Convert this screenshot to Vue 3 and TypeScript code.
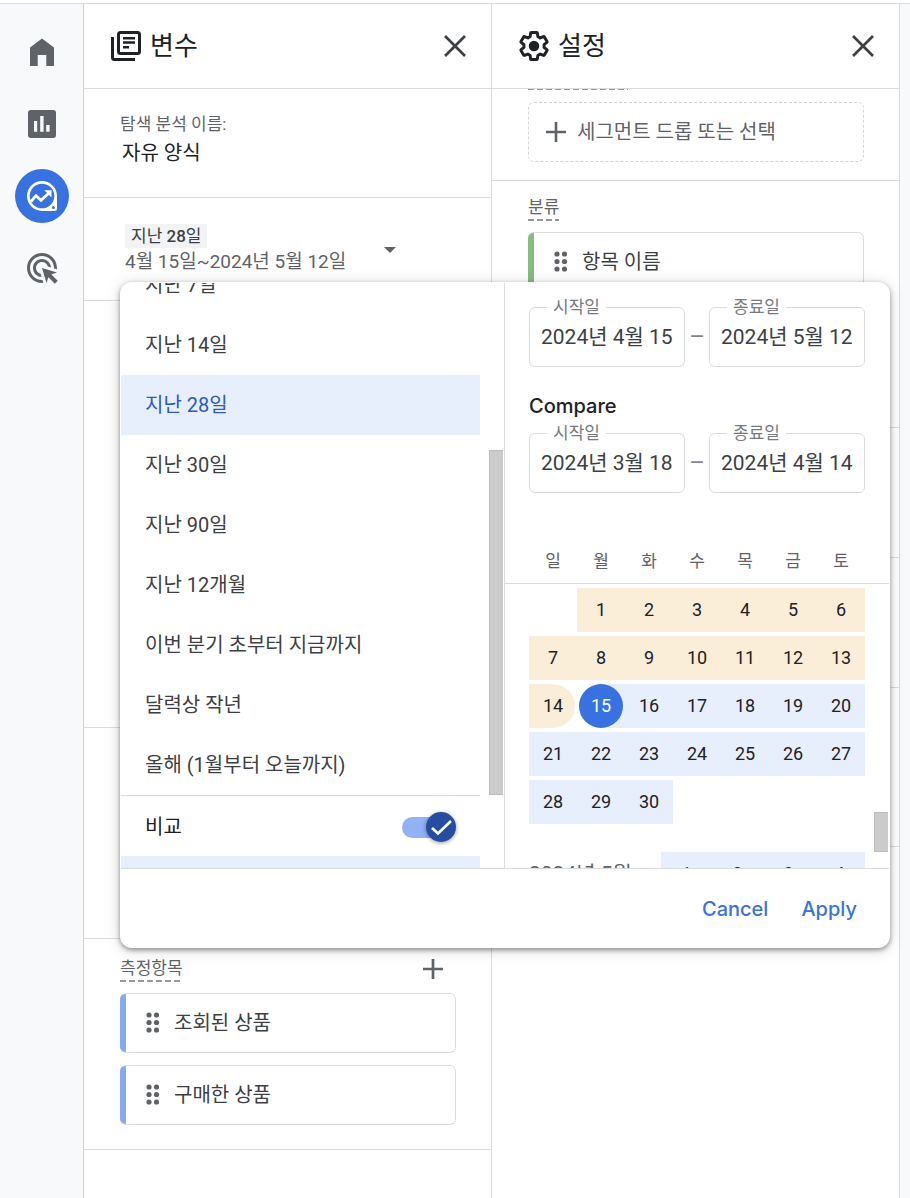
<script setup lang="ts">
import { ref } from 'vue'

type DayKind = 'empty' | 'compare' | 'compare-end' | 'start' | 'range' | 'plain'
interface Day {
  n: number | null
  kind: DayKind
}

const analysisName = ref('자유 양식')
const presets = [
  '지난 7일',
  '지난 14일',
  '지난 28일',
  '지난 30일',
  '지난 90일',
  '지난 12개월',
  '이번 분기 초부터 지금까지',
  '달력상 작년',
  '올해 (1월부터 오늘까지)',
]
const selected = ref('지난 28일')
const compareOn = ref(true)

const range = ref([
  { id: 'start', label: '시작일', value: '2024년 4월 15' },
  { id: 'end', label: '종료일', value: '2024년 5월 12' },
])
const compareRange = ref([
  { id: 'compare-start', label: '시작일', value: '2024년 3월 18' },
  { id: 'compare-end', label: '종료일', value: '2024년 4월 14' },
])

const weekdays = ['일', '월', '화', '수', '목', '금', '토']

function kindOf(n: number): DayKind {
  if (n < 14) return 'compare'
  if (n === 14) return 'compare-end'
  if (n === 15) return 'start'
  return 'range'
}

const weeks: Day[][] = Array.from({ length: 5 }, (_, w) =>
  Array.from({ length: 7 }, (_, d): Day => {
    const n = w * 7 + d
    return n < 1 || n > 30 ? { n: null, kind: 'empty' } : { n, kind: kindOf(n) }
  }),
)

const metrics = ['조회된 상품', '구매한 상품']
const dots = [3, 10.5, 18]
const gear =
  'M19.43 12.98c.04-.32.07-.64.07-.98 0-.34-.03-.66-.07-.98l2.11-1.65c.19-.15.24-.42.12-.64l-2-3.46c-.09-.16-.26-.25-.44-.25-.06 0-.12.01-.17.03l-2.49 1c-.52-.4-1.08-.73-1.69-.98l-.38-2.65C14.46 2.18 14.25 2 14 2h-4c-.25 0-.46.18-.49.42l-.38 2.65c-.61.25-1.17.59-1.69.98l-2.49-1c-.06-.02-.12-.03-.18-.03-.17 0-.34.09-.43.25l-2 3.46c-.13.22-.07.49.12.64l2.11 1.65c-.04.32-.07.65-.07.98 0 .33.03.66.07.98l-2.11 1.65c-.19.15-.24.42-.12.64l2 3.46c.09.16.26.25.44.25.06 0 .12-.01.17-.03l2.49-1c.52.4 1.08.73 1.69.98l.38 2.65c.03.24.24.42.49.42h4c.25 0 .46-.18.49-.42l.38-2.65c.61-.25 1.17-.59 1.69-.98l2.49 1c.06.02.12.03.18.03.17 0 .34-.09.43-.25l2-3.46c.12-.22.07-.49-.12-.64l-2.11-1.65z'
const target =
  'M11.71 17.99C8.53 17.84 6 15.22 6 12c0-3.31 2.69-6 6-6 3.22 0 5.84 2.53 5.99 5.71l-2.1-.63C15.48 9.31 13.89 8 12 8c-2.21 0-4 1.79-4 4 0 1.89 1.31 3.48 3.08 3.89l.63 2.1zM22 12c0 .3-.01.6-.04.9l-1.97-.59c.01-.1.01-.21.01-.31 0-4.42-3.58-8-8-8s-8 3.58-8 8 3.58 8 8 8c.1 0 .21 0 .31-.01l.59 1.97c-.3.03-.6.04-.9.04-5.52 0-10-4.48-10-10S6.48 2 12 2s10 4.48 10 10zm-3.77 4.26L22 15l-10-3 3 10 1.26-3.77 4.27 4.27 1.98-1.98-4.28-4.26z'
</script>

<template>
  <div class="page">
    <nav class="rail" aria-label="탐색">
      <button class="rail-btn" type="button" aria-label="홈">
        <svg viewBox="0 0 36 36" width="36" height="36"><path d="M6 13.5 18 4.5l12 9V32h-7.7V21h-8.6v11H6z" fill="#5f6368" /></svg>
      </button>
      <button class="rail-btn" type="button" aria-label="보고서">
        <svg viewBox="0 0 36 36" width="36" height="36">
          <rect x="4" y="4" width="28" height="28" rx="3" fill="#5f6368" />
          <path d="M10 15h3.2v10.7H10zM16.2 10h3.4v15.7h-3.4zM22.2 19h3.4v6.7h-3.4z" fill="#f8f9fa" />
        </svg>
      </button>
      <button class="rail-btn active" type="button" aria-label="탐색 분석">
        <svg viewBox="0 0 36 36" width="36" height="36">
          <path d="M18 3a15 15 0 1 0 0 30h12.5q2.5 0 2.5-2.5V18A15 15 0 0 0 18 3z" fill="#fff" />
          <circle cx="18" cy="18" r="12.3" fill="#3872e0" />
          <circle cx="29.4" cy="29.4" r="1.5" fill="#3872e0" />
          <path d="M7 23.5 12 17.7l5 4.6 8-7.3" fill="none" stroke="#fff" stroke-width="2.8" />
          <path d="M20.3 12.2h7.2v7.2z" fill="#fff" />
        </svg>
      </button>
      <button class="rail-btn" type="button" aria-label="광고">
        <svg viewBox="0 0 24 24" width="36" height="36"><path :d="target" fill="#5f6368" /></svg>
      </button>
    </nav>

    <section class="panel">
      <header class="panel-head">
        <svg viewBox="0 0 36 36" width="36" height="36" fill="none" stroke="#202124" stroke-width="3">
          <rect x="10.5" y="4.5" width="21" height="21" rx="2" />
          <path d="M4.5 9v20.5q0 2 2 2H27" />
          <path d="M15 10.3h12M15 14.5h12M15 19.3h6" stroke-width="2.6" />
        </svg>
        <h2>변수</h2>
        <button class="icon-btn" type="button" aria-label="변수 닫기">
          <svg viewBox="0 0 36 36" width="36" height="36"><path d="m8 8 20 20M28 8 8 28" stroke="#3c4043" stroke-width="2.7" /></svg>
        </button>
      </header>

      <div class="block name-block">
        <label class="small" for="analysis-name">탐색 분석 이름:</label>
        <input id="analysis-name" v-model="analysisName" class="name-input" type="text" />
      </div>

      <div class="block date-block">
        <button class="date-btn" type="button">
          <span class="date-text">
            <span class="tag">지난 <b>28</b>일</span>
            <span class="dates">4월 15일~2024년 5월 12일</span>
          </span>
          <svg viewBox="0 0 12 6" width="12" height="6"><path d="M0 0h12L6 6z" fill="#5f6368" /></svg>
        </button>
      </div>

      <div class="block segments-block"></div>
      <div class="block dims-block"></div>

      <div class="block metrics-block">
        <div class="metrics-head">
          <span class="small dashed">측정항목</span>
          <button class="icon-btn" type="button" aria-label="측정항목 추가">
            <svg viewBox="0 0 36 36" width="36" height="36"><path d="M8 18h20M18 8v20" stroke="#5f6368" stroke-width="2.7" /></svg>
          </button>
        </div>
        <div v-for="m in metrics" :key="m" class="chip">
          <svg viewBox="0 0 14 23" width="14" height="23" fill="#5f6368">
            <template v-for="y in dots" :key="y">
              <circle cx="3" :cy="y" r="2.6" />
              <circle cx="10.5" :cy="y" r="2.6" />
            </template>
          </svg>
          <span>{{ m }}</span>
        </div>
      </div>
    </section>

    <section class="panel">
      <header class="panel-head">
        <svg viewBox="0 0 24 24" width="36" height="36">
          <path :d="gear" transform="translate(1.2 1.2) scale(.9)" fill="none" stroke="#202124" stroke-width="2.2" stroke-linejoin="round" />
          <circle cx="12" cy="12" r="3.5" fill="#202124" />
        </svg>
        <h2>설정</h2>
        <button class="icon-btn" type="button" aria-label="설정 닫기">
          <svg viewBox="0 0 36 36" width="36" height="36"><path d="m8 8 20 20M28 8 8 28" stroke="#3c4043" stroke-width="2.7" /></svg>
        </button>
      </header>

      <div class="block segment-drop">
        <div class="cut-line"></div>
        <button class="drop" type="button">
          <svg viewBox="0 0 20 20" width="20" height="20"><path d="M0 10h20M10 0v20" stroke="#5f6368" stroke-width="2.6" /></svg>
          세그먼트 드롭 또는 선택
        </button>
      </div>
      <div class="block rows-block">
        <span class="small dashed">분류</span>
        <div class="chip green">
          <svg viewBox="0 0 14 23" width="14" height="23" fill="#5f6368">
            <template v-for="y in dots" :key="y">
              <circle cx="3" :cy="y" r="2.6" />
              <circle cx="10.5" :cy="y" r="2.6" />
            </template>
          </svg>
          <span>항목 이름</span>
        </div>
      </div>
      <div class="block slot"></div>
      <div class="block slot"></div>
      <div class="block slot tall"></div>
    </section>

    <div class="canvas"></div>

    <div class="picker" role="dialog" aria-label="기간 선택">
      <div class="picker-body">
        <div class="presets">
          <button
            v-for="p in presets"
            :key="p"
            class="preset"
            :class="{ on: p === selected }"
            type="button"
            @click="selected = p"
          >
            {{ p }}
          </button>
          <div class="compare-row">
            <label for="compare-toggle">비교</label>
            <span class="switch">
              <input id="compare-toggle" v-model="compareOn" type="checkbox" role="switch" />
              <span class="knob" :class="{ off: !compareOn }">
                <svg viewBox="0 0 30 30" width="30" height="30"><path d="m6 16 6 5.500L25 9" fill="none" stroke="#fff" stroke-width="2.7" /></svg>
              </span>
            </span>
          </div>
          <div class="next-preset"></div>
          <div class="thumb thumb-left"></div>
        </div>

        <div class="calendar">
          <div class="fields">
            <template v-for="(f, i) in range" :key="f.id">
              <span v-if="i" class="dash">–</span>
              <div class="field">
                <label :for="f.id">{{ f.label }}</label>
                <input :id="f.id" v-model="f.value" type="text" />
              </div>
            </template>
          </div>
          <h3>Compare</h3>
          <div class="fields">
            <template v-for="(f, i) in compareRange" :key="f.id">
              <span v-if="i" class="dash">–</span>
              <div class="field">
                <label :for="f.id">{{ f.label }}</label>
                <input :id="f.id" v-model="f.value" type="text" />
              </div>
            </template>
          </div>

          <div class="weekdays">
            <span v-for="d in weekdays" :key="d">{{ d }}</span>
          </div>
          <table class="month">
            <tbody>
              <tr v-for="(week, w) in weeks" :key="w">
                <td v-for="(day, d) in week" :key="d" :class="day.kind">
                  <button v-if="day.n" type="button">{{ day.n }}</button>
                </td>
              </tr>
            </tbody>
          </table>
          <table class="month next">
            <tbody>
              <tr>
                <th scope="row">2024년 5월</th>
                <td v-for="n in 4" :key="n" class="range"><button type="button">{{ n }}</button></td>
              </tr>
            </tbody>
          </table>
          <div class="thumb thumb-right"></div>
        </div>
      </div>
      <footer class="picker-foot">
        <button type="button">Cancel</button>
        <button type="button">Apply</button>
      </footer>
    </div>
  </div>
</template>

<style>
body {
  margin: 0;
  background: #fff;
}
</style>

<style scoped>
.page {
  position: relative;
  box-sizing: border-box;
  display: flex;
  min-height: 100vh;
  padding-top: 4px;
  background: linear-gradient(#fff 3px, #dadce0 3px, #dadce0 4px, #fff 4px);
  color: #3c4043;
  font-family: Roboto, "Noto Sans CJK KR", sans-serif;
  font-size: 20px;
  line-height: 28px;
}
.page *,
.page *::before {
  box-sizing: border-box;
}
button,
input {
  margin: 0;
  padding: 0;
  border: 0;
  background: none;
  color: inherit;
  font: inherit;
}
button {
  cursor: pointer;
}
svg {
  display: block;
  flex: none;
}
h2,
h3 {
  margin: 0;
  font-weight: 400;
}

.rail {
  flex: none;
  display: flex;
  flex-direction: column;
  align-items: center;
  gap: 18px;
  width: 84px;
  padding-top: 21px;
  border-right: 1px solid #cdd0d5;
  background: #f8f9fb;
}
.rail-btn {
  display: grid;
  place-items: center;
  width: 54px;
  height: 54px;
  border-radius: 50%;
}
.rail-btn.active {
  background: #3872e0;
}
.canvas {
  flex: none;
  width: 10px;
  background: #f8f9fb;
}

.panel {
  flex: 1;
  min-width: 0;
  border-right: 1px solid #dadce0;
}
.panel-head {
  display: flex;
  align-items: center;
  height: 85px;
  padding: 0 18px 0 24px;
  border-bottom: 1px solid #dadce0;
}
.panel-head h2 {
  flex: 1;
  margin-left: 6px;
  color: #202124;
  font-size: 26px;
  line-height: 36px;
}
.icon-btn {
  width: 36px;
  height: 36px;
}
.block {
  padding: 0 35px 0 36px;
  border-bottom: 1px solid #dadce0;
}
.small {
  color: #5f6368;
  font-size: 17px;
  line-height: 24px;
}
.dashed {
  padding-bottom: 2px;
  background: repeating-linear-gradient(90deg, #9499a0 0 6px, transparent 6px 9px) left bottom / 100% 2px no-repeat;
}

.name-block {
  display: flex;
  flex-direction: column;
  height: 109px;
  padding-top: 23px;
}
.name-input {
  width: 100%;
  height: 30px;
  padding-left: 2px;
  color: #202124;
}
.date-block {
  height: 103px;
  padding-top: 26px;
}
.date-btn {
  display: flex;
  align-items: center;
  gap: 38px;
  padding-left: 5px;
  text-align: left;
}
.date-text {
  display: flex;
  flex-direction: column;
  align-items: flex-start;
}
.tag {
  padding: 0 6px;
  background: #f1f3f4;
  font-size: 17px;
  line-height: 24px;
}
.tag b {
  font-weight: 500;
}
.dates {
  color: #5f6368;
  font-size: 19px;
}
.segments-block {
  height: 427px;
}
.dims-block {
  height: 211px;
}
.metrics-block {
  display: flex;
  flex-direction: column;
  gap: 12px;
  padding-top: 12px;
  padding-bottom: 24px;
}
.metrics-head {
  display: flex;
  align-items: center;
  justify-content: space-between;
  height: 36px;
  margin-bottom: -6px;
  padding-right: 5px;
}
.chip {
  display: flex;
  align-items: center;
  gap: 14px;
  height: 60px;
  padding-left: 26px;
  border: 1px solid #dadce0;
  border-left: 0;
  border-radius: 6px;
  background: linear-gradient(90deg, #86a9ef 6px, #fff 6px);
}
.chip.green {
  background: linear-gradient(90deg, #84bd7c 6px, #fff 6px);
}

.cut-line {
  width: 100px;
  height: 1px;
  margin-bottom: 12px;
  background: repeating-linear-gradient(90deg, #9499a0 0 6px, transparent 6px 9px);
}
.segment-drop {
  padding-bottom: 18px;
}
.drop {
  display: flex;
  align-items: center;
  gap: 11px;
  width: 100%;
  height: 60px;
  padding-left: 17px;
  border: 1px dashed #d3d6da;
  border-radius: 6px;
  color: #5f6368;
}
.rows-block {
  display: flex;
  flex-direction: column;
  align-items: flex-start;
  gap: 11px;
  height: 247px;
  padding-top: 14px;
}
.rows-block .chip {
  width: 100%;
}
.slot {
  height: 130px;
}
.slot.tall {
  height: 159px;
}

/* Date picker floating over both panels */
.picker {
  position: absolute;
  top: 282px;
  left: 120px;
  right: 20px;
  padding: 1px 1px 0;
  border-radius: 12px;
  background: #fff;
  box-shadow: 0 2px 5px rgba(0, 0, 0, 0.4), 0 2px 16px rgba(0, 0, 0, 0.15);
}
.picker-body {
  display: grid;
  grid-template-columns: 1fr 1fr;
  height: 586px;
  border-bottom: 1px solid #dadce0;
}
.presets {
  position: relative;
  display: flex;
  flex-direction: column;
  justify-content: flex-end;
  overflow: hidden;
  padding-right: 24px;
  border-right: 1px solid #dadce0;
}
.preset {
  flex: none;
  height: 60px;
  padding-left: 24px;
  text-align: left;
}
.preset.on {
  background: #e8effc;
  color: #2a5bc0;
}
.compare-row {
  flex: none;
  display: flex;
  align-items: center;
  justify-content: space-between;
  height: 61px;
  padding: 2px 24px 0;
  border-top: 1px solid #dadce0;
  color: #202124;
}
.switch {
  position: relative;
  display: flex;
  align-items: center;
  width: 54px;
  height: 30px;
}
.switch input {
  appearance: none;
  width: 48px;
  height: 21px;
  border-radius: 11px;
  background: #93b2f3;
}
.knob {
  position: absolute;
  top: 0;
  right: 0;
  width: 30px;
  height: 30px;
  border-radius: 50%;
  background: #264ea0;
  box-shadow: 0 1px 4px rgba(0, 0, 0, 0.4);
  pointer-events: none;
}
.knob.off {
  right: 24px;
}
.next-preset {
  flex: none;
  height: 12px;
  background: #e8effc;
}
.thumb {
  position: absolute;
  width: 14px;
  border: 1px solid #bdbdbd;
  border-right: 0;
  background: #cbcbcb;
}
.thumb-left {
  top: 167px;
  right: 1px;
  height: 345px;
}
.thumb-right {
  top: 529px;
  right: 1px;
  height: 40px;
}

.calendar {
  position: relative;
  overflow: hidden;
  padding: 24px 24px 0;
}
.fields {
  display: grid;
  grid-template-columns: 1fr 24px 1fr;
  align-items: center;
}
.dash {
  color: #80868b;
  font-size: 24px;
  text-align: center;
}
.field {
  position: relative;
  height: 60px;
  border: 1px solid #dadce0;
  border-radius: 6px;
}
.field label {
  position: absolute;
  top: -13px;
  left: 17px;
  padding: 0 6px;
  background: #fff;
  color: #777b80;
  font-size: 17px;
  line-height: 24px;
}
.field input {
  width: 100%;
  height: 100%;
  padding: 0 0 4px 11px;
  font-size: 21px;
}
h3 {
  margin: 26px 0 14px;
  color: #202124;
  font-family: Inter, sans-serif;
  font-size: 20px;
  font-weight: 500;
  line-height: 26px;
}
.weekdays {
  display: grid;
  grid-template-columns: repeat(7, 1fr);
  height: 45px;
  margin: 46px -24px 0;
  padding: 0 24px;
  border-bottom: 1px solid #dadce0;
  color: #5f6368;
  font-size: 17px;
  line-height: 45px;
  text-align: center;
}
.month {
  width: 100%;
  border-collapse: separate;
  border-spacing: 0 4px;
  table-layout: fixed;
  color: #202124;
  font-size: 18px;
}
.month td {
  height: 44px;
  padding: 0;
  text-align: center;
}
.month button {
  display: block;
  width: 100%;
  height: 44px;
}
.month .compare {
  background: #fbeed8;
}
.month .compare-end button {
  width: calc(100% - 2px);
  padding-left: 2px;
  border-radius: 0 22px 22px 0;
  background: #fbeed8;
}
.month .range {
  background: #e8effc;
}
.month .start {
  background: linear-gradient(90deg, #fff 50%, #e8effc 50%);
}
.month .start button {
  width: 44px;
  margin: 0 auto;
  border-radius: 50%;
  background: #3872e0;
  color: #fff;
}
.month.next {
  margin-top: 20px;
}
.month th {
  width: 132px;
  padding: 0;
  color: #5f6368;
  font-size: 21px;
  font-weight: 400;
  text-align: left;
}

.picker-foot {
  display: flex;
  align-items: center;
  justify-content: flex-end;
  gap: 33px;
  height: 79px;
  padding-right: 32px;
  color: #3872e0;
  font-family: Inter, sans-serif;
  font-size: 20px;
  font-weight: 500;
}
</style>
